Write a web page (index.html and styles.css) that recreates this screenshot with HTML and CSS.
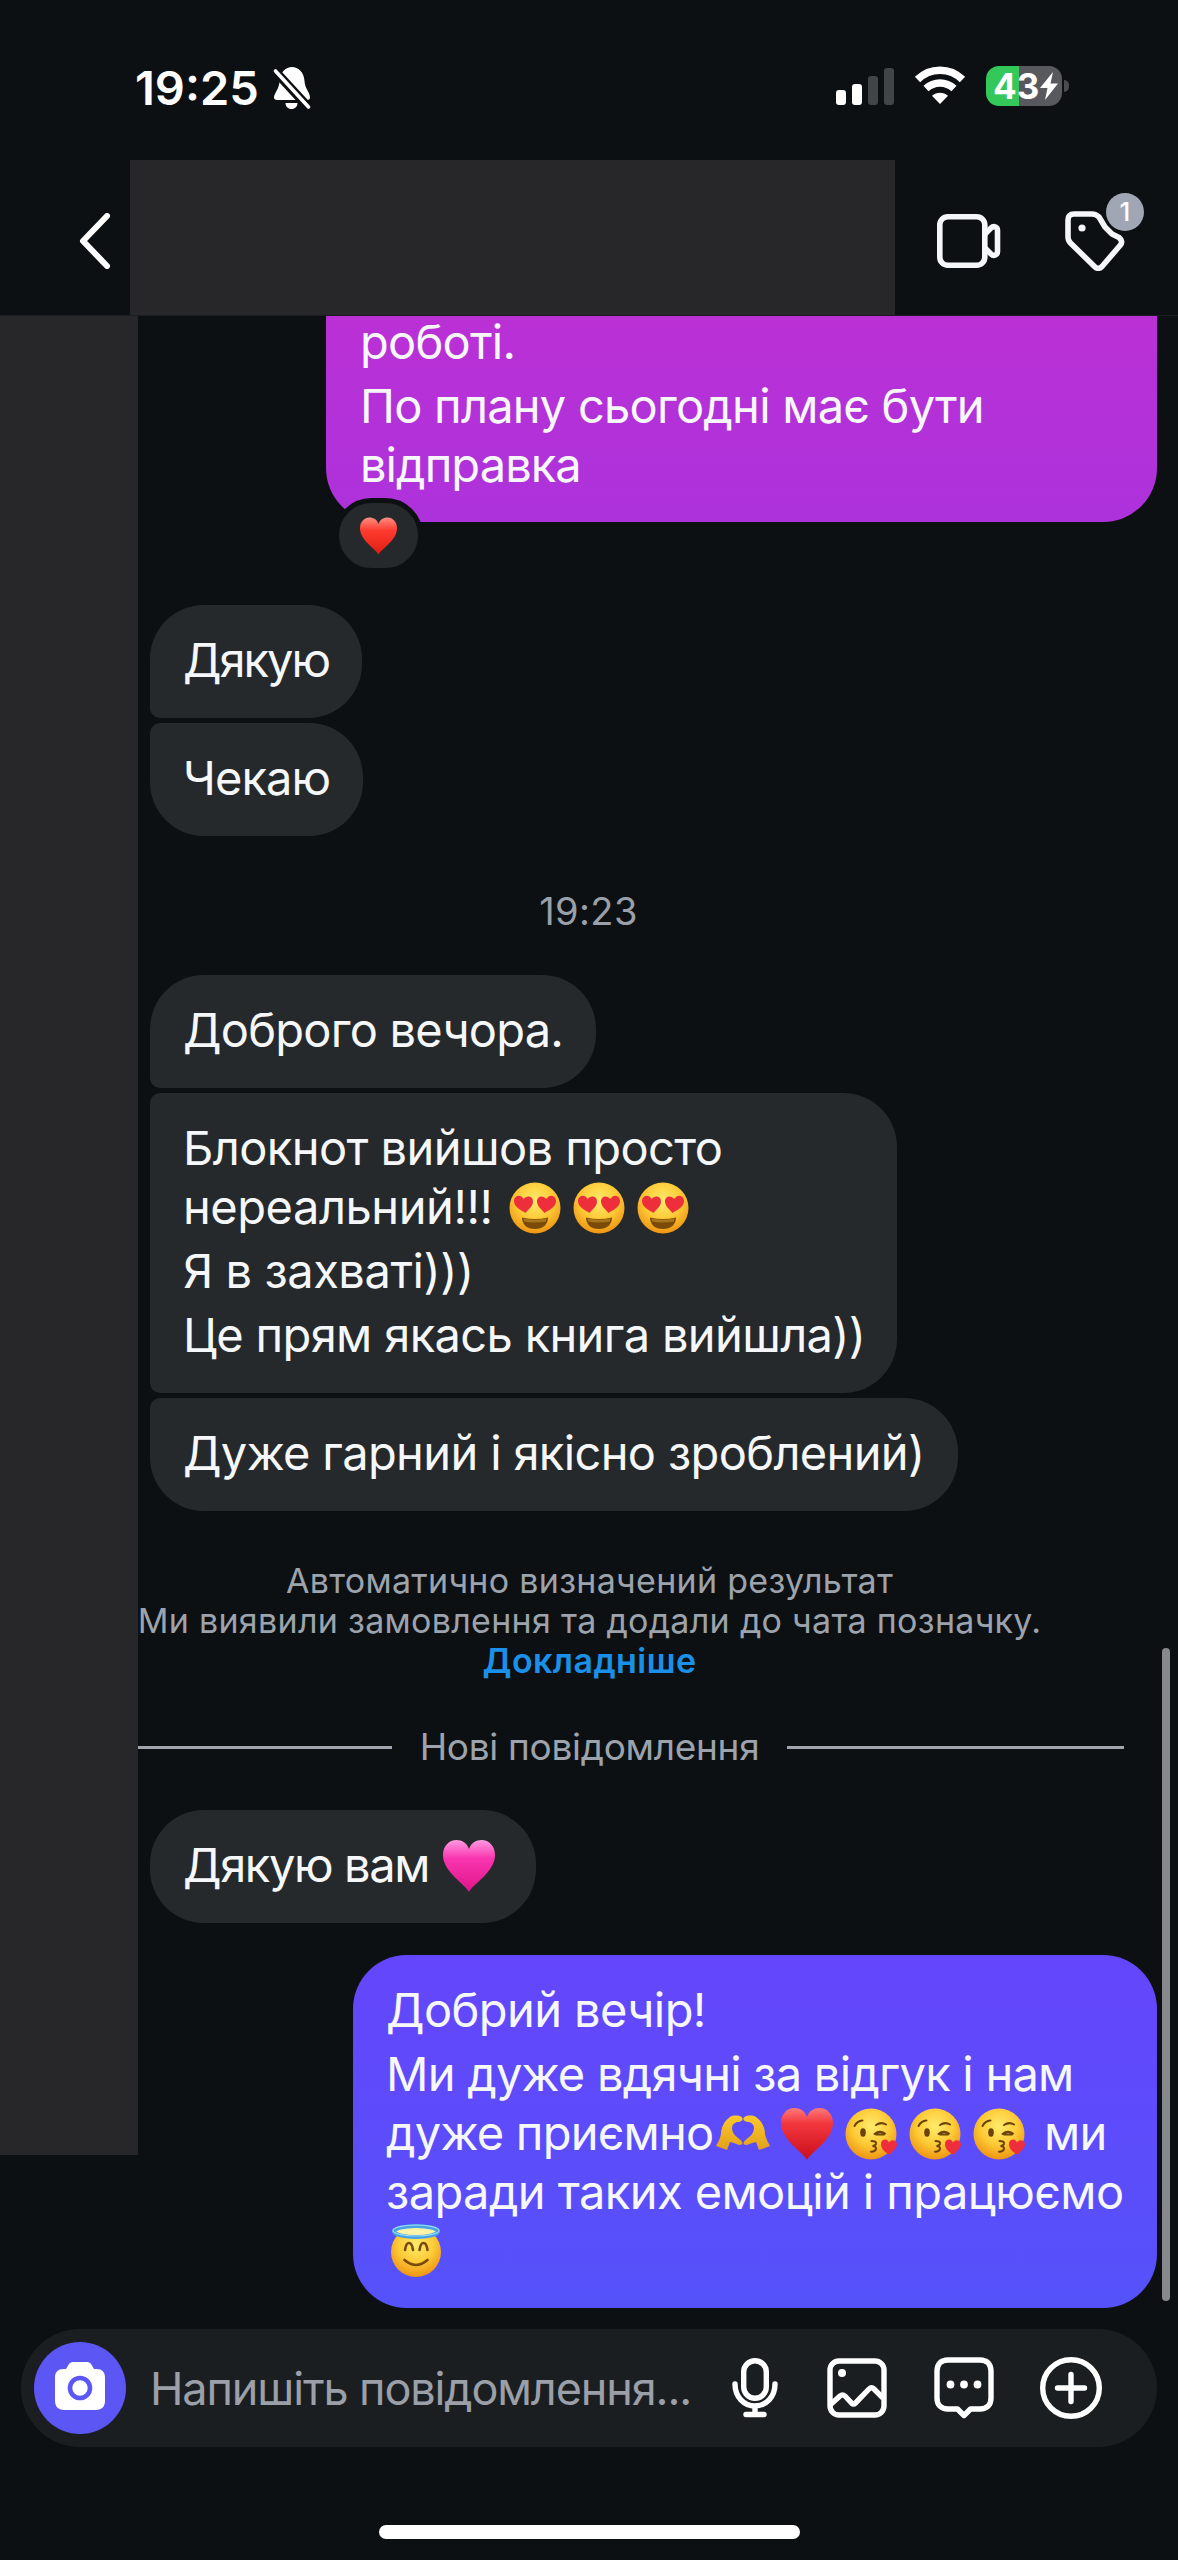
FILE: index.html
```html
<!DOCTYPE html>
<html lang="uk">
<head>
<meta charset="utf-8">
<title>Чат</title>
<link rel="stylesheet" href="styles.css">
</head>
<body>
<svg class="sprite" aria-hidden="true">
  <defs>
    <radialGradient id="face" cx=".5" cy=".35" r=".65"><stop offset="0" stop-color="#ffec6b"/><stop offset=".55" stop-color="#fdcb38"/><stop offset="1" stop-color="#ef9412"/></radialGradient>
    <linearGradient id="red" x1="0" y1="0" x2="0" y2="1"><stop offset="0" stop-color="#ff7a78"/><stop offset=".3" stop-color="#f3363e"/><stop offset="1" stop-color="#c90f1c"/></linearGradient>
    <linearGradient id="bright" x1="0" y1="0" x2="0" y2="1"><stop offset="0" stop-color="#ff8d80"/><stop offset=".35" stop-color="#ff3b2f"/><stop offset="1" stop-color="#e01d12"/></linearGradient>
    <linearGradient id="pink" x1="0" y1="0" x2="0" y2="1"><stop offset="0" stop-color="#ff9ae0"/><stop offset=".35" stop-color="#f936b0"/><stop offset="1" stop-color="#e0148a"/></linearGradient>
    <linearGradient id="hand" x1="0" y1="0" x2="0" y2="1"><stop offset="0" stop-color="#fdc92d"/><stop offset="1" stop-color="#e2a01c"/></linearGradient>
  </defs>
  <symbol id="heart" viewBox="0 0 52 52"><path d="M26 52C22 44 0 32 0 15 0 6 6 0 13.500 0 19 0 24 3 26 9 28 3 33 0 38.500 0 46 0 52 6 52 15 52 32 30 44 26 52Z"/></symbol>
  <symbol id="love" viewBox="0 0 52 52">
    <circle cx="26" cy="26" r="25.500" fill="url(#face)"/>
    <path d="M13 35.500q13 3 26 0c0 7-5 11.500-13 11.500s-13-4.500-13-11.500z" fill="#7a4a08"/>
    <path d="M14.500 36.500q11.500 2 23 0l-.6 3q-11 2-21.800 0z" fill="#a9751c"/>
    <path d="M16.500 31C12 28 4.500 25 5 18.500 5.500 13 12 12 14.500 17 18 12.500 24.500 14 24 20 23.500 25 19 27.500 16.500 31Z" fill="#ee2f3b"/>
    <path d="M35.500 31C40 28 47.500 25 47 18.500 46.500 13 40 12 37.500 17 34 12.500 27.500 14 28 20 28.500 25 33 27.500 35.500 31Z" fill="#ee2f3b"/>
  </symbol>
  <symbol id="kiss" viewBox="0 0 52 52">
    <circle cx="26" cy="26" r="25.500" fill="url(#face)"/>
    <path d="M9.500 18q2.500-5 8-5.500" fill="none" stroke="#6b4207" stroke-width="2" stroke-linecap="round"/>
    <path d="M31 17q5-3.500 10-.5M29.500 26q5-4 10.500-.5M31 26.500h8" fill="none" stroke="#6b4207" stroke-width="2" stroke-linecap="round"/>
    <ellipse cx="18" cy="24.500" rx="2.800" ry="4.200" fill="#6b4207"/>
    <path d="M26.500 33q5 0 4.500 2.800-.5 2-3.500 2.200 4 .3 3.500 3-.7 2.800-5 2.700" fill="none" stroke="#6b4207" stroke-width="2" stroke-linecap="round"/>
    <path d="M45 47C42 45 35.500 42 36 35.500 36.500 30.500 42.500 30 44 34.500 46.500 30.500 52 32 52 36.500 51.500 41 46.500 43.500 45 47Z" fill="#ee2f3b"/>
  </symbol>
  <symbol id="angel" viewBox="0 0 52 54">
    <circle cx="26" cy="28" r="25" fill="url(#face)"/>
    <ellipse cx="26" cy="7.500" rx="22" ry="5.500" fill="#fff3a8" stroke="#45a3e3" stroke-width="4"/>
    <ellipse cx="26" cy="6.500" rx="23" ry="5.500" fill="none" stroke="#9cd9f7" stroke-width="1.200"/>
    <path d="M15 26q1-7 4-7t4 7M29.500 26q1-7 4-7t4 7M14.500 36q11.500 10 23 0" fill="none" stroke="#7a4a08" stroke-width="2.600" stroke-linecap="round"/>
  </symbol>
  <symbol id="hands" viewBox="0 0 54 36">
    <g fill="url(#hand)"><path d="M0 31C2 27 4 24 5 19 5 13 8 6 14 2 17 0 24 0 26 2.500 28 5 25 7 21 7 15 9 15 14 18 19 20 22 26 25 26.500 28 26 31 22 30 18 28L14 27 11 35Z"/><path d="M54 31C52 27 50 24 49 19 49 13 46 6 40 2 37 0 30 0 28 2.500 26 5 29 7 33 7 39 9 39 14 36 19 34 22 28 25 27.500 28 28 31 32 30 36 28L40 27 43 35Z"/></g>
  </symbol>
</svg>

<div class="status">
  <span class="clock">19:25</span>
  <svg class="bell" viewBox="0 0 38 42"><path d="M19 0c6 0 12 5 12.500 14 .4 8 5.500 11 5.500 16.500 0 1.500-1 2.500-3 2.500H4c-2 0-3-1-3-2.500C1 26 6.500 22 6.500 14 7 5 13 0 19 0zM12.500 36h12c0 3.500-2.500 6-6 6s-6-2.500-6-6z" fill="#fff"/><path d="M2 4l34 37" stroke="#0c1013" stroke-width="9"/><path d="M2.500 4l33 36" stroke="#fff" stroke-width="3.600" stroke-linecap="round"/></svg>
  <div class="indicators">
    <svg class="signal" viewBox="0 0 58 37"><rect y="22" width="10" height="15" rx="3" fill="#fff"/><rect x="16" y="16" width="10" height="21" rx="3" fill="#fff"/><rect x="32" y="8" width="10" height="29" rx="3" fill="#424548"/><rect x="48" width="10" height="37" rx="3" fill="#424548"/></svg>
    <svg class="wifi" viewBox="0 0 52 38"><path d="M3.500 13.500C16 1 36 1 48.500 13.500M12 22.500c8-7.500 20-7.500 28 0" fill="none" stroke="#fff" stroke-width="7.500"/><path d="M26 38l-8-8.200c4.500-4.200 11.500-4.200 16 0z" fill="#fff"/></svg>
    <div class="battery"><span class="pct">43</span><svg class="bolt" viewBox="0 0 18 28"><path d="M13 0L0 16h7.500L5 28 18 11.500h-7.500z" fill="#fff"/></svg></div>
    <span class="nub"></span>
  </div>
</div>

<header class="header">
  <svg class="back" viewBox="0 0 32 56"><path d="M28 3L4 28l24 25" fill="none" stroke="#fff" stroke-width="6" stroke-linecap="round" stroke-linejoin="round"/></svg>
  <div class="contact"></div>
  <svg class="video" viewBox="0 0 66 56"><g fill="none" stroke="#f4f6f8" stroke-width="5.600" stroke-linejoin="round"><rect x="3.800" y="3.800" width="45" height="48.400" rx="8"/><path d="M49 21l6-6c2.500-2.500 6.500-1.500 6.500 2.500v21c0 4-4 5-6.500 2.500l-6-6"/></g></svg>
  <div class="tag">
    <svg class="tag-icon" viewBox="0 0 60 60"><path d="M9 3h18c3 0 5 1 7 3l6 10 7 7 7 3.500c3 2.500 3.500 5.500 1 8L37 55.500c-2.500 2.500-5 2.500-7.500 0L5.500 32C4 30.500 3 28.500 3 26V9c0-4 2-6 6-6z" fill="none" stroke="#f4f6f8" stroke-width="5.600" stroke-linejoin="round"/><circle cx="17" cy="17" r="3.600" fill="#f4f6f8"/></svg>
    <span class="badge">1</span>
  </div>
</header>

<main class="thread">
  <aside class="gutter"></aside>
  <section class="messages">
    <div class="bubble mine first">
      <p><span class="snug">роботі.</span></p>
      <p><span class="snug">По плану сьогодні має бути</span><br><span class="close">відправка</span></p>
      <span class="reaction"><svg><use href="#heart"/></svg></span>
    </div>

    <div class="group thanks">
      <div class="bubble theirs top"><p><span class="tightest">Дякую</span></p></div>
      <div class="bubble theirs bottom"><p><span class="close">Чекаю</span></p></div>
    </div>

    <time class="stamp">19:23</time>

    <div class="group">
      <div class="bubble theirs top"><p><span class="snug">Доброго вечора.</span></p></div>
      <div class="bubble theirs middle">
        <p><span class="loose">Блокнот вийшов просто</span><br><span class="looser">нереальний!!!</span> <svg class="emoji after-space"><use href="#love"/></svg><svg class="emoji"><use href="#love"/></svg><svg class="emoji"><use href="#love"/></svg></p>
        <p><span class="looser">Я в захваті)))</span></p>
        <p>Це прям якась книга вийшла))</p>
      </div>
      <div class="bubble theirs bottom"><p>Дуже гарний і якісно зроблений)</p></div>
    </div>

    <div class="notice">
      <div>Автоматично визначений результат</div>
      <div>Ми виявили замовлення та додали до чата позначку.</div>
      <a class="more">Докладніше</a>
    </div>

    <div class="divider"><i class="rule left"></i><span>Нові повідомлення</span><i class="rule"></i></div>

    <div class="bubble theirs alone"><p><span class="tight">Дякую вам</span> <svg class="emoji pink"><use href="#heart"/></svg></p></div>

    <div class="bubble mine last">
      <p><span class="loose">Добрий вечір!</span></p>
      <p><span class="snug">Ми дуже вдячні за відгук і нам</span><br><span class="snug">дуже приємно</span><svg class="emoji hands"><use href="#hands"/></svg><svg class="emoji red"><use href="#heart"/></svg><svg class="emoji"><use href="#kiss"/></svg><svg class="emoji"><use href="#kiss"/></svg><svg class="emoji"><use href="#kiss"/></svg> ми<br><span class="loose">заради таких емоцій і працюємо</span><br><svg class="emoji angel"><use href="#angel"/></svg></p>
    </div>
  </section>
  <div class="scrollbar"></div>
</main>

<footer class="composer">
  <span class="camera"><svg viewBox="0 0 50 48"><path d="M18 0h14c2 0 3.500 1 4.500 2.800L39 7h2.500C47 7 50 10 50 15.500v23C50 44.500 47 48 41 48H9c-6 0-9-3.500-9-9.500v-23C0 10 3 7 8.500 7H11l2.500-4.200C14.500 1 16 0 18 0z" fill="#fff"/><circle cx="25" cy="26" r="10" fill="#fff" stroke="#5b56f4" stroke-width="4.600"/></svg></span>
  <span class="placeholder">Напишіть повідомлення...</span>
  <svg class="tool mic" viewBox="0 0 46 60"><g fill="none" stroke="#fff" stroke-width="5.400" stroke-linecap="round"><rect x="11.700" y="2.700" width="22.600" height="37.600" rx="11.300"/><path d="M3 26c0 13 9 22 20 22s20-9 20-22M23 49v7M14 56.500h18"/></g></svg>
  <svg class="tool image" viewBox="0 0 60 60"><g fill="none" stroke="#fff" stroke-width="5.400" stroke-linejoin="round"><rect x="3" y="3" width="54" height="54" rx="9"/><path d="M3 47l10-9c2-1.600 3-1.600 5 0l6.500 7c1.500 1.500 2.500 1.500 4 0L42 31c2-2 3-2 5 0l9 9"/></g><circle cx="15" cy="15" r="4" fill="#fff"/></svg>
  <svg class="tool chat" viewBox="0 0 60 62"><path d="M14 3h32c7 0 11 4 11 11v27c0 7-4 11-11 11h-9.500L30 58.500 23.500 52H14C7 52 3 48 3 41V14C3 7 7 3 14 3z" fill="none" stroke="#fff" stroke-width="5.400" stroke-linejoin="round"/><g fill="#fff"><circle cx="16.500" cy="27.500" r="3.900"/><circle cx="30" cy="27.500" r="3.900"/><circle cx="43.500" cy="27.500" r="3.900"/></g></svg>
  <svg class="tool plus" viewBox="0 0 62 62"><g fill="none" stroke="#fff" stroke-width="5.400" stroke-linecap="round"><circle cx="31" cy="31" r="28.300"/><path d="M31 17.500v27M17.500 31h27"/></g></svg>
</footer>
<div class="home"></div>
</body>
</html>
```
FILE: styles.css
```css
* { box-sizing: border-box; }
body {
  margin: 0;
  width: 1178px;
  height: 2560px;
  overflow: hidden;
  display: flex;
  flex-direction: column;
  background: #0c1013;
  color: #f5f7f9;
  font-family: Inter, "Liberation Sans", sans-serif;
  font-size: 47px;
  line-height: 59px;
}
p { margin: 0; white-space: nowrap; }
svg { display: block; }
.sprite { width: 0; height: 0; position: absolute; }

.status { display: flex; height: 160px; padding: 66px 109px 0 135px; flex: none; }
.clock { width: 138px; height: 44px; line-height: 44px; font-size: 47px; font-weight: 600; color: #fff; }
.bell { width: 38px; height: 42px; margin-top: 1px; }
.indicators { display: flex; margin-left: auto; }
.signal { width: 58px; height: 37px; margin: 2px 20px 0 0; }
.wifi { width: 52px; height: 38px; margin-right: 20px; }
.battery {
  display: flex;
  align-items: center;
  width: 76px;
  height: 40px;
  padding-left: 7px;
  border-radius: 13px;
  background: linear-gradient(90deg, #34c759 33px, #58595e 33px);
}
.pct { width: 47px; font-size: 35px; font-weight: 700; line-height: 40px; color: #fff; }
.bolt { width: 18px; height: 28px; }
.nub { width: 5px; height: 12px; margin: 14px 0 0 2px; border-radius: 0 5px 5px 0; background: #4a4c50; }

.header { display: flex; flex: none; height: 155px; padding-left: 79px; }
.back { width: 32px; height: 56px; margin: 53px 19px 0 0; }
.contact { width: 765px; height: 155px; background: #272729; }
.video { width: 66px; height: 56px; margin: 53px 0 0 41px; }
.tag { position: relative; width: 60px; height: 60px; margin: 51px 0 0 63px; }
.tag-icon { width: 60px; height: 60px; }
.badge {
  position: absolute;
  left: 41px;
  top: -18px;
  width: 38px;
  height: 38px;
  border-radius: 50%;
  background: #a0a6b4;
  color: #fff;
  font-size: 26px;
  font-weight: 500;
  line-height: 38px;
  text-align: center;
}

.thread { position: relative; display: flex; flex: none; height: 2014px; overflow: hidden; border-top: 1px solid #1a1e21; }
.gutter { flex: none; width: 138px; height: 1839px; background: #272729; }
.messages { display: flex; flex: 1; flex-direction: column; align-items: flex-start; padding: 0 21px 0 12px; }
.bubble { position: relative; padding: 25px 33px 29px; border-radius: 54px; letter-spacing: -.64px; }
.bubble p + p { margin-top: 5px; }
.looser { letter-spacing: -.45px; }
.loose { letter-spacing: -.58px; }
.snug { letter-spacing: -.76px; }
.close { letter-spacing: -.93px; }
.tight { letter-spacing: -1.38px; }
.tightest { letter-spacing: -2px; }
.theirs { background: #25292c; }
.theirs.top { border-bottom-left-radius: 10px; }
.theirs.middle { width: 747px; border-top-left-radius: 10px; border-bottom-left-radius: 10px; }
.theirs.bottom { border-top-left-radius: 10px; }
.mine { align-self: flex-end; }
.mine.first {
  width: 831px;
  height: 210px;
  margin-top: -4px;
  padding: 0 34px;
  border-radius: 0 0 54px 54px;
  background: linear-gradient(#ba30d5, #ad32dc);
}
.mine.last { width: 804px; height: 353px; margin-top: 32px; background: linear-gradient(#6446fb, #5552fa); }
.reaction {
  position: absolute;
  left: 8px;
  bottom: -51px;
  width: 89px;
  height: 75px;
  padding: 14px 21px 0;
  border: 5px solid #0c1013;
  border-radius: 38px;
  background: #25292c;
}
.reaction svg { width: 37px; height: 38px; fill: url(#bright); }
.group { display: flex; flex-direction: column; align-items: flex-start; gap: 5px; }
.thanks { margin-top: 83px; }
.stamp { align-self: center; margin: 50px 130px 39px 0; height: 50px; line-height: 50px; font-size: 38px; letter-spacing: .4px; color: #9aa0a9; }
.emoji { display: inline-block; width: 52px; height: 52px; margin: 0 6px; vertical-align: -10px; }
.after-space { margin-left: 4px; }
.hands { width: 54px; height: 36px; margin: 0 5px 0 3px; vertical-align: -1px; }
.pink { margin: 0 8px 0 1px; fill: url(#pink); }
.red { fill: url(#red); }
.angel { height: 54px; margin-left: 4px; }

.notice { width: 903px; margin: 50px 0 0 -12px; font-size: 34px; line-height: 40px; letter-spacing: .3px; white-space: nowrap; text-align: center; color: #9da3ac; }
.notice div { display: flex; justify-content: center; }
.more { display: block; font-weight: 600; letter-spacing: .43px; color: #1b90e8; }
.divider { display: flex; align-items: center; justify-content: space-between; width: 986px; height: 44px; margin: 44px 0 41px -12px; font-size: 37px; line-height: 44px; letter-spacing: -.3px; color: #9da3ac; }
.rule { width: 337px; height: 3px; background: #a0a5ad; }
.rule.left { width: 254px; }
.scrollbar { position: absolute; right: 8px; top: 1332px; width: 8px; height: 653px; border-radius: 4px; background: #88898c; }

.composer { display: flex; flex: none; align-items: center; width: 1136px; height: 118px; margin-left: 21px; padding: 0 55px 0 13px; border-radius: 59px; background: #1b1e20; }
.camera { display: flex; align-items: center; justify-content: center; width: 92px; height: 92px; border-radius: 50%; background: #5b56f4; }
.camera svg { width: 50px; height: 48px; margin-top: -5px; }
.placeholder { margin: 0 auto 0 24px; font-size: 45px; letter-spacing: -1.12px; white-space: nowrap; color: #9a9fa8; }
.tool { height: 60px; flex: none; }
.mic { width: 46px; margin-right: 49px; }
.image { width: 60px; margin-right: 47px; }
.chat { width: 60px; height: 62px; margin-right: 46px; }
.plus { width: 62px; height: 62px; }
.home { width: 421px; height: 14px; margin: 78px 0 0 379px; border-radius: 7px; background: #fff; flex: none; }
```
